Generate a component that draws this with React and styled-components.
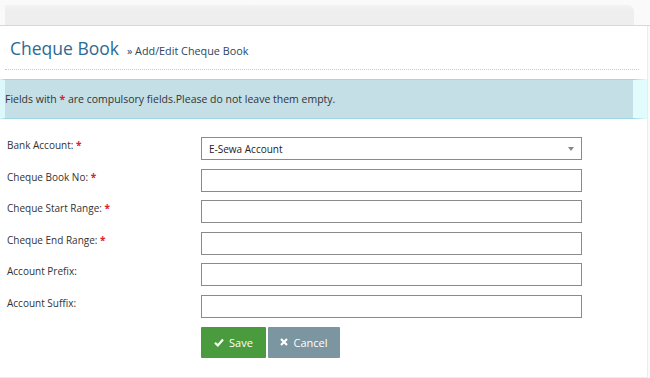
import React from "react";
import styled, { createGlobalStyle } from "styled-components";

const GlobalStyle = createGlobalStyle`
  body {
    margin: 0;
    background: #fafafa;
    font-family: "Open Sans", "DejaVu Sans", sans-serif;
  }
`;

const Page = styled.div`
  width: 650px;
  height: 378px;
  display: flex;
  flex-direction: column;
  overflow: hidden;
`;

const TopStrip = styled.div`
  padding: 5px 16px 0 5px;
  border-bottom: 1px solid #d8d8d8;
  background: #fafafa;
`;

const TopBar = styled.div`
  height: 20px;
  background: linear-gradient(#f3f3f3, #eeeeee 30%);
  border-top-right-radius: 6px;
`;

const Panel = styled.div`
  flex: 1;
  background: #fff;
  margin-right: 2px;
  border-right: 1px solid #ececec;
  border-bottom: 1px solid #ececec;
`;

const Header = styled.div`
  margin: 0 8px 0 5px;
  padding: 10px 0 9px 5px;
  border-bottom: 1px dotted #c8c8c8;
  display: flex;
  align-items: baseline;
  gap: 8px;
`;

const Title = styled.h1`
  margin: 0;
  font-size: 17.5px;
  line-height: 24px;
  font-weight: 400;
  color: #2d6a94;
`;

const Crumb = styled.span`
  font-size: 10.8px;
  color: #2c4560;
`;

const Alert = styled.div`
  margin-top: 9px;
  height: 38px;
  display: flex;
  align-items: center;
  background: #c4dfe6;
  border-top: 1px solid #9fd6e3;
  border-bottom: 1px solid #9fd6e3;
  border-left: 5px solid #dcf8fb;
  border-right: 14px solid #e2fcfe;
  font-size: 10.5px;
  color: #333;
`;

const Star = styled.span`
  color: #d9232d;
  font-weight: 700;
`;

const Form = styled.form`
  padding: 18px 0 0 7px;
  display: grid;
  grid-template-columns: 194px 381px;
  row-gap: 8.6px;
`;

const Label = styled.label`
  font-size: 10px;
  color: #333;
  padding-top: 1px;
`;

const Input = styled.input`
  box-sizing: border-box;
  height: 23px;
  width: 100%;
  border: 1px solid #8a8a8a;
  background: #fff;
  margin: 0;
  padding: 0 7px;
  font-family: inherit;
  font-size: 10px;
  outline: none;
`;

const SelectBox = styled.div`
  box-sizing: border-box;
  height: 23px;
  border: 1px solid #8a8a8a;
  display: flex;
  align-items: center;
  justify-content: space-between;
  padding: 0 7px;
  font-size: 10px;
  color: #222;
`;

const Caret = styled.span`
  width: 0;
  height: 0;
  border-left: 3px solid transparent;
  border-right: 3px solid transparent;
  border-top: 4px solid #888;
`;

const Actions = styled.div`
  grid-column: 2;
  display: flex;
  gap: 2px;
`;

const Button = styled.button`
  height: 31px;
  width: ${(p) => p.$w}px;
  border: none;
  border-radius: 1px;
  background: ${(p) => p.$bg};
  color: #fff;
  font-family: inherit;
  font-size: 11px;
  display: flex;
  align-items: center;
  justify-content: center;
  gap: 5px;
  padding: 0;
`;

const fields = [
  { label: "Bank Account:", required: true, select: "E-Sewa Account" },
  { label: "Cheque Book No:", required: true },
  { label: "Cheque Start Range:", required: true },
  { label: "Cheque End Range:", required: true },
  { label: "Account Prefix:" },
  { label: "Account Suffix:" },
];

export default function App() {
  return (
    <Page>
      <GlobalStyle />
      <TopStrip>
        <TopBar />
      </TopStrip>
      <Panel>
        <Header>
          <Title>Cheque Book</Title>
          <Crumb>» Add/Edit Cheque Book</Crumb>
        </Header>
        <Alert>
          Fields with&nbsp;<Star>*</Star>&nbsp;are compulsory fields.Please do
          not leave them empty.
        </Alert>
        <Form>
          {fields.map((f) => (
            <React.Fragment key={f.label}>
              <Label>
                {f.label} {f.required && <Star>*</Star>}
              </Label>
              {f.select ? (
                <SelectBox>
                  {f.select}
                  <Caret />
                </SelectBox>
              ) : (
                <Input type="text" />
              )}
            </React.Fragment>
          ))}
          <Actions>
            <Button type="button" $bg="#4a9a3e" $w={65}>
              <svg width="10" height="9" viewBox="0 0 10 9">
                <path d="M1 4.8 L3.8 7.4 L9 1.6" stroke="#fff" strokeWidth="2.2" fill="none" />
              </svg>
              Save
            </Button>
            <Button type="button" $bg="#7b95a1" $w={72}>
              <svg width="8" height="8" viewBox="0 0 8 8">
                <path d="M1 1 L7 7 M7 1 L1 7" stroke="#fff" strokeWidth="2.2" />
              </svg>
              Cancel
            </Button>
          </Actions>
        </Form>
      </Panel>
    </Page>
  );
}
